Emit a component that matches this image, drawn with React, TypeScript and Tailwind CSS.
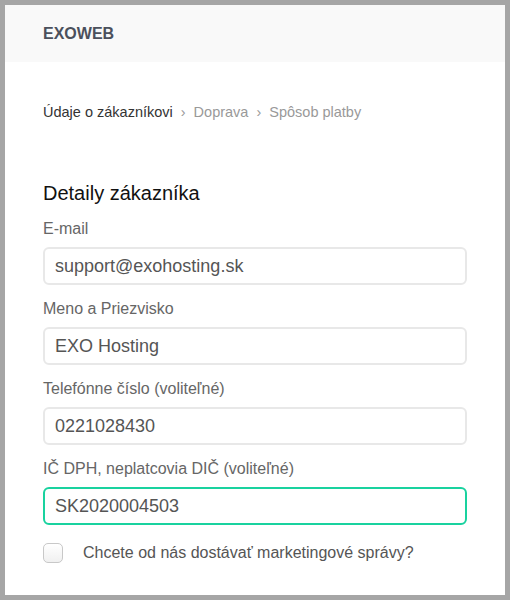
import { useState } from "react";

const fields = [
  { label: "E-mail", value: "support@exohosting.sk" },
  { label: "Meno a Priezvisko", value: "EXO Hosting" },
  { label: "Telefónne číslo (voliteľné)", value: "0221028430" },
  { label: "IČ DPH, neplatcovia DIČ (voliteľné)", value: "SK2020004503", focused: true },
];

const App = () => {
  const [values, setValues] = useState(fields.map((f) => f.value));
  const [marketing, setMarketing] = useState(false);

  return (
    <div
      className="h-[600px] w-[510px] border-[5px] border-[#a6a6a6] bg-white"
      style={{ fontFamily: '"Liberation Sans", Arial, sans-serif' }}
    >
      {/* header */}
      <div className="flex h-[57px] items-center bg-[#f9f9f9] px-[38px]">
        <span className="mt-[1px] text-[16px] font-bold text-[#4b505c]">EXOWEB</span>
      </div>

      <div className="px-[38px]">
        {/* breadcrumb */}
        <nav className="mt-[42px] flex items-center gap-[8px] text-[14.5px] leading-[16px]">
          <span className="text-[#333]">Údaje o zákazníkovi</span>
          <span className="text-[#999]">›</span>
          <span className="text-[#999]">Doprava</span>
          <span className="text-[#999]">›</span>
          <span className="text-[#999]">Spôsob platby</span>
        </nav>

        <h2 className="mt-[61px] text-[20px] leading-[24px] text-[#111]">Detaily zákazníka</h2>

        <div className="mt-[15px] flex flex-col gap-[15px]">
          {fields.map((f, i) => (
            <div key={f.label} className="flex flex-col">
              <label className="h-[18px] text-[16px] leading-[18px] text-[#666]">{f.label}</label>
              <input
                value={values[i]}
                onChange={(e) => setValues(values.map((v, j) => (j === i ? e.target.value : v)))}
                className={`mt-[9px] h-[38px] w-[424px] rounded-[6px] border-2 bg-white px-[10px] text-[18px] text-[#555] outline-none ${
                  f.focused ? "border-[#19d29f]" : "border-[#e8e8e8]"
                }`}
              />
            </div>
          ))}
        </div>

        {/* marketing checkbox */}
        <label className="mt-[18px] flex items-center gap-[20px]">
          <button
            type="button"
            onClick={() => setMarketing(!marketing)}
            className="h-[20px] w-[20px] shrink-0 rounded-[5px] border border-[#c8c8c8] bg-gradient-to-b from-white to-[#f0f0f0]"
          >
            {marketing && <span className="block text-[13px] leading-[18px] text-[#555]">✓</span>}
          </button>
          <span className="text-[16px] leading-[20px] text-[#555]">Chcete od nás dostávať marketingové správy?</span>
        </label>
      </div>
    </div>
  );
};

export default App;
